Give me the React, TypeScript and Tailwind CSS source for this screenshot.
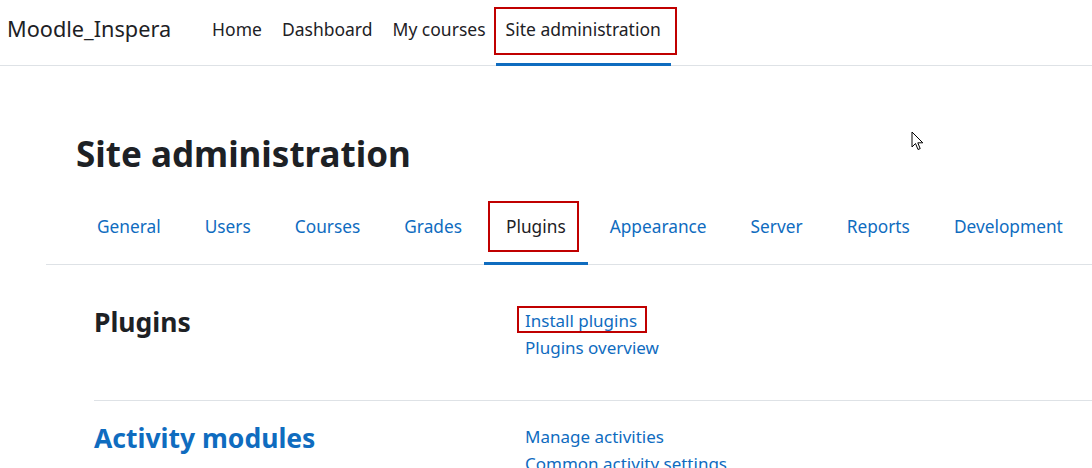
const navItems = ["Home", "Dashboard", "My courses", "Site administration"];
const tabs = ["General", "Users", "Courses", "Grades", "Plugins", "Appearance", "Server", "Reports", "Development"];

const font = { fontFamily: '"Segoe UI", "Noto Sans", sans-serif' };

const Section = ({
  title,
  titleLink,
  links,
  boxed,
}: {
  title: string;
  titleLink?: boolean;
  links: string[];
  boxed?: string;
}) => (
  <div className="grid grid-cols-[431px_1fr] ml-[48px]">
    <h3
      className={`text-[26.5px] font-bold leading-[31px] ${titleLink ? "text-[#0f6cbf]" : "text-[#1d2125]"}`}
    >
      {title}
    </h3>
    <ul className="flex flex-col">
      {links.map((l) => (
        <li key={l} className="text-[17px] leading-[27px] text-[#0f6cbf] whitespace-nowrap">
          <span className="relative">
            {l}
            {boxed === l && (
              <span className="absolute left-[-8px] right-[-10px] top-[-3px] bottom-[-1px] border-2 border-[#c00000]" />
            )}
          </span>
        </li>
      ))}
    </ul>
  </div>
);

const Cursor = () => (
  <svg className="absolute left-[911px] top-[131px]" width="14" height="21" viewBox="0 0 14 21">
    <path
      d="M1 1 L1 16 L4.5 12.5 L7 18.5 L9.2 17.6 L6.8 11.8 L11.8 11.8 Z"
      fill="#fff"
      stroke="#000"
      strokeWidth="1"
      strokeLinejoin="round"
    />
  </svg>
);

export default function App() {
  return (
    <div className="relative w-[1092px] h-[468px] overflow-hidden bg-white text-[#1d2125]" style={font}>
      <header className="flex h-[66px] items-stretch border-b border-[#dee2e6]">
        <div className="flex items-center pl-[7px] pb-[6px] text-[21.7px] text-[#1d2125]">Moodle_Inspera</div>
        <nav className="ml-[31px] flex items-stretch">
          {navItems.map((n) => {
            const active = n === "Site administration";
            return (
              <div key={n} className="relative flex items-center px-[10px] pb-[6px] text-[17.5px] text-[#1d2125]">
                {n}
                {active && (
                  <>
                    <span className="absolute left-0 right-0 bottom-[-1px] h-[3px] bg-[#0f6cbf]" />
                    <span className="absolute left-[-2px] right-[-6px] top-[7px] bottom-[10px] border-2 border-[#c00000]" />
                  </>
                )}
              </div>
            );
          })}
        </nav>
      </header>

      <main className="ml-[46px]">
        <h1 className="mt-[66px] pl-[30px] text-[35px] font-bold leading-[43px] text-[#1d2125]">
          Site administration
        </h1>

        <ul className="mt-[26px] flex border-b border-[#dee2e6] pl-[29px]">
          {tabs.map((t) => {
            const active = t === "Plugins";
            return (
              <li
                key={t}
                className={`relative px-[22px] pt-[12px] pb-[24px] text-[17.3px] leading-[27px] ${active ? "text-[#1d2125]" : "text-[#0f6cbf]"}`}
              >
                {t}
                {active && (
                  <>
                    <span className="absolute left-0 right-0 bottom-[-1px] h-[3px] bg-[#0f6cbf]" />
                    <span className="absolute left-[4px] right-[9px] top-0 bottom-[12px] border-2 border-[#c00000]" />
                  </>
                )}
              </li>
            );
          })}
        </ul>

        <div className="pt-[42px] pb-[39px] border-b border-[#dee2e6] ml-[48px]">
          <div className="ml-[-48px]">
            <Section title="Plugins" links={["Install plugins", "Plugins overview"]} boxed="Install plugins" />
          </div>
        </div>

        <div className="pt-[22px]">
          <Section title="Activity modules" titleLink links={["Manage activities", "Common activity settings"]} />
        </div>
      </main>

      <Cursor />
    </div>
  );
}
